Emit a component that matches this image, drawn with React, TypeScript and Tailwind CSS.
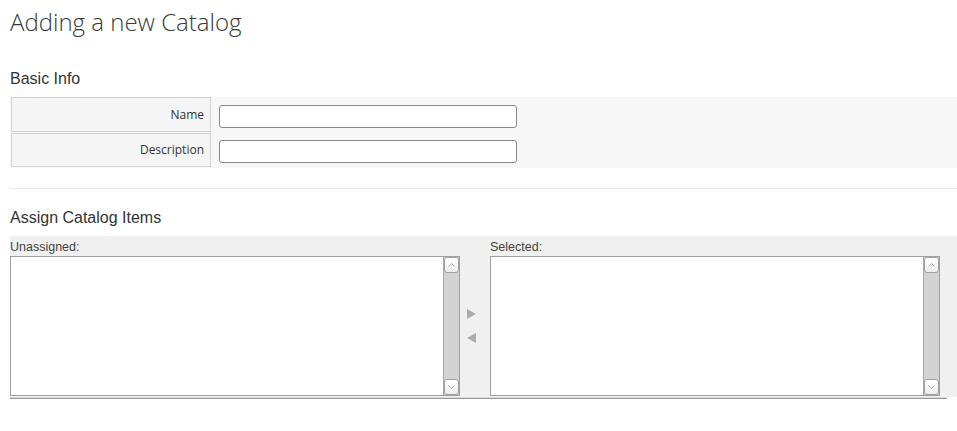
import React from 'react';

const ListBox = () => {
  return (
    <div className="flex h-[140px] w-[450px] border border-[#a0a0a0] bg-white">
      <div className="flex-1" />
      {/* fake scrollbar */}
      <div className="flex w-[16px] flex-col border-l border-[#a8a8a8] bg-[#d3d3d3]">
        <div className="flex h-[16px] items-center justify-center rounded-[3px] border border-[#a0a0a0] bg-gradient-to-b from-white to-[#ececec]">
          <svg width="7" height="4" viewBox="0 0 7 4">
            <path d="M0.5 3.5 L3.5 0.5 L6.5 3.5" fill="none" stroke="#b0b0b0" strokeWidth="1" />
          </svg>
        </div>
        <div className="flex-1" />
        <div className="flex h-[16px] items-center justify-center rounded-[3px] border border-[#a0a0a0] bg-gradient-to-b from-white to-[#ececec]">
          <svg width="7" height="4" viewBox="0 0 7 4">
            <path d="M0.5 0.5 L3.5 3.5 L6.5 0.5" fill="none" stroke="#b0b0b0" strokeWidth="1" />
          </svg>
        </div>
      </div>
    </div>
  );
};

const FieldRow = ({ label, tall }: { label: string; tall?: boolean }) => {
  return (
    <div className="flex items-start">
      <div
        className={
          (tall ? 'h-[35px] ' : 'h-[34px] ') +
          "flex w-[200px] items-center justify-end border border-[#d2d2d2] bg-[#f5f5f5] pr-[6px] font-['Open_Sans',sans-serif] text-[12px] text-[#333]"
        }
      >
        {label}
      </div>
      <input
        type="text"
        className={
          (tall ? 'mt-[8px] ' : 'mt-[7px] ') +
          'ml-[8px] h-[23px] w-[298px] rounded-[3px] border border-[#8a8a8a] bg-white outline-none'
        }
      />
    </div>
  );
};

export default function App() {
  return (
    <div className="min-h-[431px] bg-white pl-[10px] text-[#333]">
      <h1 className="pt-[6px] font-['Open_Sans',sans-serif] text-[24px] font-light leading-[32px] text-[#3a3a3a]">
        Adding a new Catalog
      </h1>

      {/* Basic Info */}
      <h3 className="mt-[32px] font-['Liberation_Sans',Arial,sans-serif] text-[16px] leading-[18px] text-[#333]">
        Basic Info
      </h3>
      <div className="mt-[9px] flex flex-col gap-[1px] bg-[#f7f7f7] pb-[1px] pl-[1px]">
        <FieldRow label="Name" tall />
        <FieldRow label="Description" />
      </div>

      <div className="mt-[20px] h-[1px] bg-[#e8e8e8]" />

      {/* Assign Catalog Items */}
      <h3 className="mt-[20px] font-['Liberation_Sans',Arial,sans-serif] text-[16px] leading-[18px] text-[#333]">
        Assign Catalog Items
      </h3>
      <div className="mt-[9px] bg-[#f0f0f0] pb-[1px]">
        <div className="flex font-['Liberation_Sans',Arial,sans-serif] text-[12.5px] leading-[14px] text-[#444]">
          <div className="h-[20px] w-[480px] pt-[4px]">Unassigned:</div>
          <div className="h-[20px] pt-[4px]">Selected:</div>
        </div>
        <div className="flex">
          <ListBox />
          <div className="flex w-[30px] flex-col items-start justify-center gap-[14px] pl-[7px]">
            <svg width="9" height="10" viewBox="0 0 9 10">
              <path d="M0 0 L9 5 L0 10 Z" fill="#ababab" />
            </svg>
            <svg width="9" height="10" viewBox="0 0 9 10">
              <path d="M9 0 L0 5 L9 10 Z" fill="#ababab" />
            </svg>
          </div>
          <ListBox />
        </div>
      </div>
      <div className="h-[2px] w-[937px] border-b border-[#999] bg-[#dcdcdc]" />
    </div>
  );
}
